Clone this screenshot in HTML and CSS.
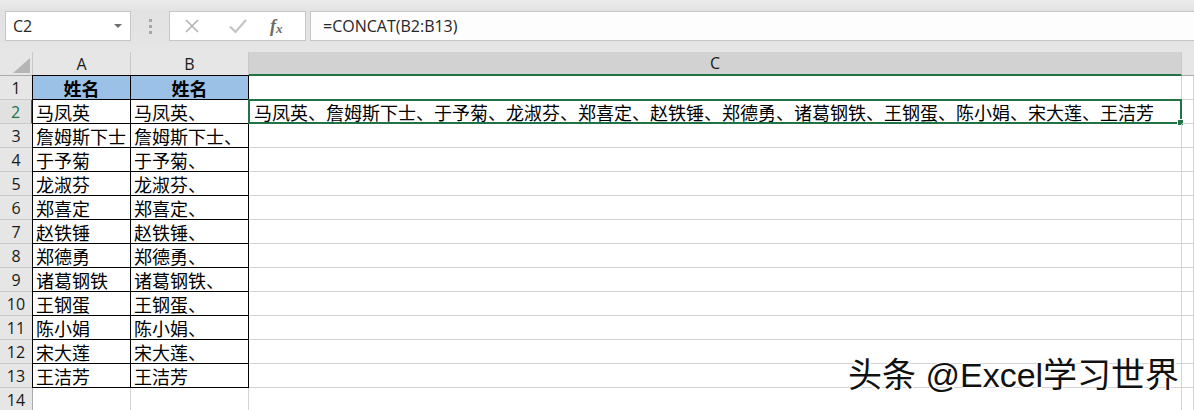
FILE: index.html
```html
<!DOCTYPE html>
<html lang="zh">
<head>
<meta charset="utf-8">
<link rel="stylesheet" href="styles.css">
</head>
<body>
<div class="app">
  <div class="toolbar">
    <div class="namebox"><span class="nb-text">C2</span><span class="nb-arrow"></span></div>
    <div class="grip"><i></i><i></i><i></i></div>
    <div class="fxbox">
      <svg class="ic ic-x" width="16" height="16" viewBox="0 0 16 16"><path d="M2 2 L14 14 M14 2 L2 14" stroke="#b3b3b3" stroke-width="1.6" fill="none"/></svg>
      <svg class="ic ic-ok" width="20" height="16" viewBox="0 0 20 16"><path d="M2 8.5 L7.5 14 L18 2" stroke="#c4c4c4" stroke-width="2.2" fill="none"/></svg>
      <span class="ic-fx">f<sub>x</sub></span>
    </div>
    <div class="formula">=CONCAT(B2:B13)</div>
  </div>
  <div class="sheet">
    <div class="grid">
      <div class="corner"><span class="tri"></span></div>
      <div class="ch">A</div>
      <div class="ch">B</div>
      <div class="ch ch-sel">C</div>
      <div class="ch ch-last"></div>

      <div class="rh">1</div>
      <div class="c bk hd first top">姓名</div>
      <div class="c bk hd top">姓名</div>
      <div class="c"></div>
      <div class="c"></div>

      <div class="rh rh-sel">2</div>
      <div class="c bk first">马凤英</div>
      <div class="c bk">马凤英、</div>
      <div class="c sel">马凤英、詹姆斯下士、于予菊、龙淑芬、郑喜定、赵铁锤、郑德勇、诸葛钢铁、王钢蛋、陈小娟、宋大莲、王洁芳<span class="selbox"><span class="handle"></span></span></div>
      <div class="c"></div>

      <div class="rh">3</div>
      <div class="c bk first">詹姆斯下士</div>
      <div class="c bk">詹姆斯下士、</div>
      <div class="c"></div>
      <div class="c"></div>

      <div class="rh">4</div>
      <div class="c bk first">于予菊</div>
      <div class="c bk">于予菊、</div>
      <div class="c"></div>
      <div class="c"></div>

      <div class="rh">5</div>
      <div class="c bk first">龙淑芬</div>
      <div class="c bk">龙淑芬、</div>
      <div class="c"></div>
      <div class="c"></div>

      <div class="rh">6</div>
      <div class="c bk first">郑喜定</div>
      <div class="c bk">郑喜定、</div>
      <div class="c"></div>
      <div class="c"></div>

      <div class="rh">7</div>
      <div class="c bk first">赵铁锤</div>
      <div class="c bk">赵铁锤、</div>
      <div class="c"></div>
      <div class="c"></div>

      <div class="rh">8</div>
      <div class="c bk first">郑德勇</div>
      <div class="c bk">郑德勇、</div>
      <div class="c"></div>
      <div class="c"></div>

      <div class="rh">9</div>
      <div class="c bk first">诸葛钢铁</div>
      <div class="c bk">诸葛钢铁、</div>
      <div class="c"></div>
      <div class="c"></div>

      <div class="rh">10</div>
      <div class="c bk first">王钢蛋</div>
      <div class="c bk">王钢蛋、</div>
      <div class="c"></div>
      <div class="c"></div>

      <div class="rh">11</div>
      <div class="c bk first">陈小娟</div>
      <div class="c bk">陈小娟、</div>
      <div class="c"></div>
      <div class="c"></div>

      <div class="rh">12</div>
      <div class="c bk first">宋大莲</div>
      <div class="c bk">宋大莲、</div>
      <div class="c"></div>
      <div class="c"></div>

      <div class="rh">13</div>
      <div class="c bk first">王洁芳</div>
      <div class="c bk">王洁芳</div>
      <div class="c"></div>
      <div class="c"></div>

      <div class="rh">14</div>
      <div class="c"></div>
      <div class="c"></div>
      <div class="c"></div>
      <div class="c"></div>
    </div>
    <div class="watermark">头条 @Excel学习世界</div>
  </div>
</div>
</body>
</html>
```

FILE: styles.css
```css
* { box-sizing: border-box; }
html, body { margin: 0; padding: 0; }
body {
  width: 1194px;
  height: 410px;
  overflow: hidden;
  background: #e6e6e6;
  font-family: "Noto Sans CJK SC", "Noto Sans", sans-serif;
}
.app { width: 1194px; height: 410px; overflow: hidden; }

.toolbar {
  height: 52px;
  display: flex;
  align-items: flex-start;
  padding-top: 11px;
  background: linear-gradient(#ececec 0, #e2e2e2 11px, #e4e4e4 40px, #e6e6e6 52px);
}
.namebox {
  margin-left: 5px;
  width: 126px;
  height: 30px;
  background: #fff;
  border: 1px solid #c6c6c6;
  display: flex;
  align-items: center;
  justify-content: space-between;
  padding: 0 8px 0 7px;
}
.nb-text {
  font-family: "Open Sans", "Noto Sans", sans-serif;
  font-size: 16px;
  color: #262626;
}
.nb-arrow {
  width: 0; height: 0;
  border-left: 4px solid transparent;
  border-right: 4px solid transparent;
  border-top: 4px solid #707070;
}
.grip {
  width: 38px;
  height: 30px;
  display: flex;
  flex-direction: column;
  align-items: center;
  justify-content: center;
  gap: 3px;
}
.grip i {
  display: block;
  width: 3px; height: 3px;
  background: #a6a6a6;
}
.fxbox {
  width: 137px;
  height: 30px;
  background: #fff;
  border: 1px solid #c6c6c6;
  display: flex;
  align-items: center;
  padding-left: 14px;
}
.ic-x { margin-right: 28px; }
.ic-ok { margin-right: 22px; }
.ic-fx {
  font-family: "Liberation Serif", "DejaVu Serif", serif;
  font-style: italic;
  font-weight: bold;
  font-size: 18px;
  color: #6a6a6a;
  line-height: 1;
}
.ic-fx sub { font-size: 13px; vertical-align: -1px; }
.formula {
  margin-left: 4px;
  flex: 1;
  height: 30px;
  background: #fdfdfd;
  border: 1px solid #c6c6c6;
  border-right: none;
  padding-left: 12px;
  font-family: "Open Sans", "Noto Sans", sans-serif;
  font-size: 16px;
  line-height: 28px;
  color: #262626;
}

.sheet { position: relative; }
.grid {
  display: grid;
  grid-template-columns: 33px 98px 118px 933px 12px;
  grid-template-rows: 24px repeat(14, 24px);
  background: #fff;
}
.corner {
  background: #e6e6e6;
  border-right: 1px solid #c9c9c9;
  border-bottom: 1px solid #ababab;
  position: relative;
}
.tri {
  position: absolute;
  left: 13px; top: 6px;
  width: 17px; height: 15px;
  background: #b5b5b5;
  clip-path: polygon(100% 0, 100% 100%, 0 100%);
}
.ch {
  background: #e6e6e6;
  border-right: 1px solid #c9c9c9;
  border-bottom: 1px solid #ababab;
  text-align: center;
  font-family: "Open Sans", "Noto Sans", sans-serif;
  font-size: 16px;
  line-height: 24px;
  color: #1a1a1a;
}
.ch-sel {
  background: #d2d2d2;
  border-bottom: 2px solid #217346;
  line-height: 22px;
}
.ch-last { border-right: none; }
.rh {
  background: #e6e6e6;
  border-right: 1px solid #ababab;
  border-bottom: 1px solid #c9c9c9;
  text-align: center;
  font-family: "Open Sans", "Noto Sans", sans-serif;
  font-size: 16px;
  line-height: 24px;
  color: #1a1a1a;
}
.rh-sel {
  color: #217346;
  border-right: 2px solid #217346;
  background: #e1e1e1;
}
.c {
  border-right: 1px solid #d4d4d4;
  border-bottom: 1px solid #d4d4d4;
  font-size: 18px;
  line-height: 24px;
  padding-left: 3px;
  color: #000;
  white-space: nowrap;
  overflow: visible;
  position: relative;
}
.c.bk {
  border-right-color: #000;
  border-bottom-color: #000;
}
.c.first { box-shadow: -1px 0 0 #000; }
.c.top { box-shadow: 0 -1px 0 #000; }
.c.first.top { box-shadow: -1px 0 0 #000, 0 -1px 0 #000, -1px -1px 0 #000; }
.c.hd {
  background: #9bc2e6;
  font-weight: bold;
  text-align: center;
  padding-left: 0;
}
.c.sel { padding-left: 5px; }
.selbox {
  position: absolute;
  left: -1px; top: -1px; right: -1px; bottom: -1px;
  border: 2px solid #217346;
  pointer-events: none;
}
.handle {
  position: absolute;
  right: -4px; bottom: -4px;
  width: 7px; height: 7px;
  background: #217346;
  border: 1px solid #fff;
}
.watermark {
  position: absolute;
  left: 848px;
  top: 303px;
  font-family: "Liberation Sans", "Noto Sans CJK SC", sans-serif;
  font-size: 34px;
  line-height: 40px;
  color: #111;
  white-space: nowrap;
  text-shadow: 1px 1px 0 #fff, -1px -1px 0 #fff, 2px 0 0 #fff, 0 2px 0 #fff;
}
```
